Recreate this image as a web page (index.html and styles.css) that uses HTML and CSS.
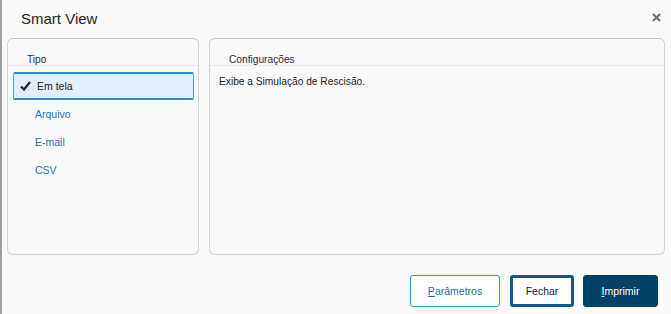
FILE: index.html
```html
<!DOCTYPE html>
<html lang="pt-BR">
<head>
  <meta charset="UTF-8">
  <title>Smart View</title>
  <link rel="stylesheet" href="styles.css">
</head>
<body>
  <div class="dialog">
    <div class="dialog-header">
      <h1>Smart View</h1>
      <button class="close" title="Fechar">
        <svg width="9" height="9" viewBox="0 0 9 9"><path d="M1 1L8 8M8 1L1 8" stroke="#6b6b6b" stroke-width="2"/></svg>
      </button>
    </div>

    <div class="panels">
      <div class="panel panel-tipo">
        <div class="panel-title">Tipo</div>
        <ul class="options">
          <li class="selected">
            <svg class="check" width="11" height="10" viewBox="0 0 11 10"><path d="M1 5.5L4 8.5L10 1" fill="none" stroke="#222" stroke-width="2.2"/></svg>
            Em tela
          </li>
          <li>Arquivo</li>
          <li>E-mail</li>
          <li>CSV</li>
        </ul>
      </div>
      <div class="panel panel-config">
        <div class="panel-title">Configurações</div>
        <p class="desc">Exibe a Simulação de Rescisão.</p>
      </div>
    </div>

    <div class="actions">
      <button class="btn btn-outline"><u>P</u>arâmetros</button>
      <button class="btn btn-focus">Fechar</button>
      <button class="btn btn-primary"><u>I</u>mprimir</button>
    </div>
  </div>
</body>
</html>
```

FILE: styles.css
```css
body { margin: 0; background: #fafafa; font-family: "Liberation Sans", Arial, sans-serif; color: #333; }
.dialog { height: 314px; box-sizing: border-box; border-left: 2px solid #9e9e9e; padding: 0 6px 0 5px; }
.dialog-header { height: 38px; display: flex; align-items: center; justify-content: space-between; }
.dialog-header h1 { margin: 0 0 2px 14px; font-size: 15px; font-weight: normal; color: #222; }
.close { border: 0; background: none; padding: 0; margin: 0 4px 3px 0; display: flex; }
.panels { display: flex; gap: 10px; height: 217px; }
.panel { border: 1px solid #d2d2d2; border-top-color: #c4c4c4; border-radius: 6px; background: #fafafa; box-sizing: border-box; }
.panel-tipo { width: 192px; }
.panel-config { flex: 1; }
.panel-title { height: 26px; border-bottom: 1px solid #e8e8e8; padding: 0 0 0 19px; font-size: 10.2px; line-height: 11px; display: flex; align-items: flex-end; color: #2a2a3a; }
.options { list-style: none; margin: 6px 4px 0 5px; padding: 0; }
.options li { height: 28px; box-sizing: border-box; display: flex; align-items: center; padding-left: 22px; font-size: 10.5px; color: #1c72b8; }
.options li.selected { background: #e2eefa; border: 1px solid #5aa3d6; border-top: 2px solid #2f8ccc; border-bottom: 2px solid #2f8ccc; border-radius: 2px; padding-left: 6px; color: #222; }
.check { margin-right: 6px; }
.desc { margin: 10px 0 0 9px; font-size: 10.2px; color: #222; }
.actions { display: flex; justify-content: flex-end; gap: 10px; padding: 20px 7px 0 0; }
.btn { height: 32px; font-family: inherit; font-size: 10.5px; border-radius: 3px; box-sizing: border-box; }
.btn-outline { width: 90px; border: 1px solid #3b8fc6; background: #fff; color: #2070b0; }
.btn-focus { width: 64px; border: 3px solid #0b5a8a; background: #fff; color: #222; }
.btn-primary { width: 75px; margin-left: -1px; border: 1px solid #004166; background: #004166; color: #fff; }
```
